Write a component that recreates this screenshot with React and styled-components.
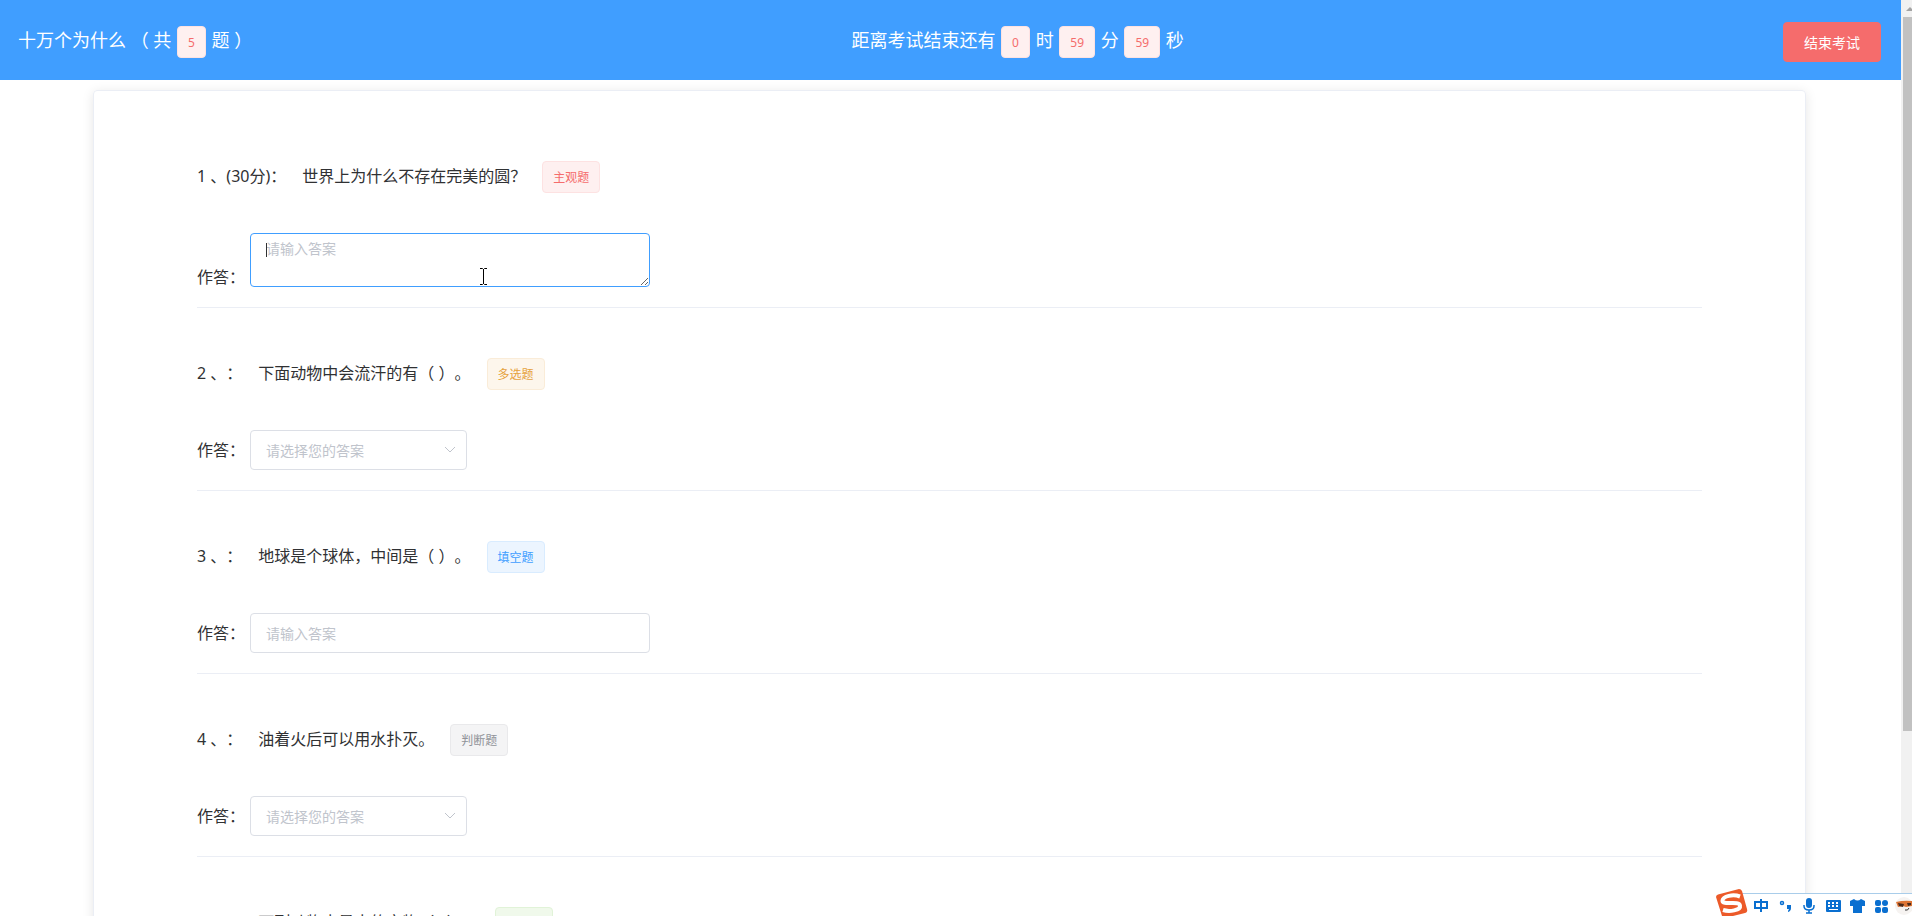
import React from "react";
import styled, { createGlobalStyle, css } from "styled-components";

const QUESTIONS = [
  {
    id: 1,
    score: "(30分)",
    title: "世界上为什么不存在完美的圆？",
    type: "主观题",
    tone: "danger",
    control: "textarea"
  },
  {
    id: 2,
    title: "下面动物中会流汗的有（ ）。",
    type: "多选题",
    tone: "warning",
    control: "select"
  },
  {
    id: 3,
    title: "地球是个球体，中间是（ ）。",
    type: "填空题",
    tone: "primary",
    control: "input"
  },
  {
    id: 4,
    title: "油着火后可以用水扑灭。",
    type: "判断题",
    tone: "info",
    control: "select"
  },
  {
    id: 5,
    title: "下列动物中最大的宠物（   ）。",
    type: "单选题",
    tone: "success",
    control: "select"
  }
];

const TONES = {
  danger: { color: "#f56c6c", background: "#fef0f0", border: "#fde2e2" },
  warning: { color: "#e6a23c", background: "#fdf6ec", border: "#faecd8" },
  primary: { color: "#409eff", background: "#ecf5ff", border: "#d9ecff" },
  info: { color: "#909399", background: "#f4f4f5", border: "#e9e9eb" },
  success: { color: "#67c23a", background: "#f0f9eb", border: "#e1f3d8" }
};

function Answer({ id, control }) {
  if (control === "textarea") {
    return (
      <TextAreaWrapper>
        <TextArea id={id} rows="2" placeholder="请输入答案" autoFocus />
        <Caret />
        <Pointer width="9" height="17" viewBox="0 0 9 17" aria-hidden="true">
          <path
            d="M1 .5h2.500l1 1 1-1H8M4.500 1v15M1 16.500h2.500l1-1 1 1H8"
            fill="none"
            stroke="#000"
          />
        </Pointer>
      </TextAreaWrapper>
    );
  }
  if (control === "input") {
    return <TextInput id={id} type="text" placeholder="请输入答案" />;
  }
  return (
    <SelectWrapper>
      <Select id={id} defaultValue="">
        <option value="">请选择您的答案</option>
      </Select>
      <svg width="12" height="12" viewBox="0 0 12 12" aria-hidden="true">
        <path d="M1 3l5 5 5-5" fill="none" stroke="#c0c4cc" />
      </svg>
    </SelectWrapper>
  );
}

function Question({ question }) {
  const { id, score, title, type, tone, control } = question;
  return (
    <QuestionItem>
      <QuestionTitle>
        <span>
          {id} 、{score}：
        </span>
        <Title>{title}</Title>
        <Tag $tone={tone}>{type}</Tag>
      </QuestionTitle>
      <AnswerRow $multiline={control === "textarea"}>
        <label htmlFor={`answer-${id}`}>作答：</label>
        <Answer id={`answer-${id}`} control={control} />
      </AnswerRow>
    </QuestionItem>
  );
}

function ImeBar() {
  return (
    <ImeContainer>
      <svg width="197" height="28" viewBox="0 0 197 28" aria-hidden="true">
        <path d="M26 5.500H197V28H26z" fill="#fff" />
        <path d="M26 5.500H197" stroke="#a9cdea" />
        <path
          d="M1 9Q1 7 3 6.500L24 1Q26 1 27 3L32 21Q33 24 30 25L18 28H7z"
          fill="#ec5a29"
        />
        <path
          d="M25 8.500C18 6 8 8 7.500 12.500C7 18 24 12 25 17.500C26 22.500 14 24 8 22"
          fill="none"
          stroke="#fff"
          strokeWidth="4"
        />
        <g fill="none" stroke="#0a6fd0" strokeWidth="2">
          <path d="M40 14h12v6H40zM46 11v13" />
          <circle cx="67" cy="15" r="1.500" strokeWidth="1.500" />
          <path d="M89 17v1q0 4 5 4t5-4v-1M94 22v3M91 25h6" strokeWidth="1.500" />
        </g>
        <g fill="#0a6fd0">
          <path d="M72 17h4v3q0 3-3 4v-1l1-2h-2z" />
          <rect x="91" y="10" width="6" height="10" rx="3" />
          <path
            fillRule="evenodd"
            d="M112 12h13q1 0 1 1v10q0 1-1 1h-13q-1 0-1-1V13q0-1 1-1zm1 2v2h2v-2zm4 0v2h2v-2zm4 0v2h2v-2zm-8 3v2h2v-2zm4 0v2h2v-2zm4 0v2h2v-2zm-7 4v1h9v-1z"
          />
          <path d="M135 13l4-2q3.500 3 7 0l4 2v5h-3v7h-9v-7h-3z" />
          <rect x="160" y="12" width="6" height="6" rx="2" />
          <rect x="167" y="12" width="6" height="6" rx="3" />
          <rect x="160" y="19" width="6" height="6" rx="2" />
          <rect x="167" y="19" width="6" height="6" rx="2" />
        </g>
        <circle cx="189" cy="18" r="9" fill="#f6f3f1" />
        <path d="M181 14q8-2 16-1v5l-6 1-3-1-5 1z" fill="#dd7434" />
        <path d="M183 15l6 1-1 3-4-1zM192 15h4v2l-3 1z" fill="#4a2a1c" />
        <path d="M190 22q3 1 4-2" fill="none" stroke="#333" />
      </svg>
    </ImeContainer>
  );
}

export default function App() {
  return (
    <Page>
      <GlobalStyle />
      <Main>
        <Header>
          <HeaderText>
            十万个为什么 （ 共 <Tag $tone="danger">5</Tag> 题 ）
          </HeaderText>
          <HeaderText>
            距离考试结束还有 <Tag $tone="danger">0</Tag> 时{" "}
            <Tag $tone="danger">59</Tag> 分 <Tag $tone="danger">59</Tag> 秒
          </HeaderText>
          <DangerButton type="button">结束考试</DangerButton>
        </Header>
        <Card>
          {QUESTIONS.map(question => (
            <Question key={question.id} question={question} />
          ))}
        </Card>
      </Main>
      <ScrollTrack>
        <svg width="9" height="17" viewBox="0 0 9 17" aria-hidden="true">
          <path d="M3 11l4-4 4 4z" fill="#a3a3a3" />
        </svg>
        <ScrollThumb />
      </ScrollTrack>
      <ImeBar />
    </Page>
  );
}

const GlobalStyle = createGlobalStyle`
  * {
    box-sizing: border-box;
  }
  body {
    margin: 0;
    color: #303133;
    background: #fff;
    font-family: "Noto Sans", "Noto Sans CJK SC", sans-serif;
    font-size: 16px;
    text-spacing-trim: space-all;
  }
  input, textarea, select, button {
    font-family: inherit;
    font-size: 14px;
  }
`;

const Page = styled.div`
  display: flex;
  height: 100vh;
  overflow: hidden;
`;
const Main = styled.main`
  flex: 1;
  min-width: 0;
  overflow: hidden;
`;
const Header = styled.header`
  display: flex;
  align-items: center;
  justify-content: space-between;
  height: 80px;
  padding: 4px 20px 0 18px;
  color: #fff;
  background: #409eff;
`;
const Tag = styled.span`
  height: 32px;
  padding: 0 10px;
  border: 1px solid;
  border-radius: 4px;
  font-size: 12px;
  line-height: 32px;
  white-space: nowrap;
  ${({ $tone }) => css`
    color: ${TONES[$tone].color};
    background: ${TONES[$tone].background};
    border-color: ${TONES[$tone].border};
  `}
`;
const HeaderText = styled.div`
  display: flex;
  align-items: flex-start;
  gap: 1px;
  font-size: 18px;
  line-height: 28px;
  white-space: pre;
`;
const DangerButton = styled.button`
  height: 40px;
  padding: 0 20px;
  border: 1px solid #f56c6c;
  border-radius: 4px;
  color: #fff;
  background: #f56c6c;
`;
const Card = styled.section`
  margin: 10px 95px 10px 93px;
  padding: 20px 103px;
  border: 1px solid #ebeef5;
  border-radius: 4px;
  box-shadow: 0 2px 12px 0 rgba(0, 0, 0, 0.1);
`;
const QuestionItem = styled.article`
  padding: 50px 0 20px;
  border-bottom: 1px solid #ebeef5;
`;
const QuestionTitle = styled.div`
  display: flex;
  align-items: flex-start;
  height: 32px;
  margin-bottom: 40px;
  line-height: 30px;
`;
const Title = styled.span`
  margin: 0 16px;
  white-space: pre;
`;
const AnswerRow = styled.div`
  display: flex;
  align-items: ${({ $multiline }) => ($multiline ? "flex-end" : "center")};
  label {
    width: 53px;
    line-height: 20px;
    white-space: nowrap;
  }
`;
const field = css`
  border: 1px solid #dcdfe6;
  border-radius: 4px;
  color: #606266;
  background: #fff;
  outline: none;
  &::placeholder {
    color: #c0c4cc;
  }
  &:focus {
    border-color: #409eff;
  }
`;
const TextInput = styled.input`
  ${field}
  width: 400px;
  height: 40px;
  padding: 0 15px;
`;
const TextAreaWrapper = styled.div`
  position: relative;
`;
const TextArea = styled.textarea`
  ${field}
  display: block;
  width: 400px;
  height: 54px;
  padding: 4px 15px;
  line-height: 21px;
  caret-color: transparent;
`;
const Caret = styled.span`
  position: absolute;
  top: 10px;
  left: 16px;
  width: 1px;
  height: 14px;
  background: #303133;
`;
const Pointer = styled.svg`
  position: absolute;
  top: 35px;
  left: 229px;
  pointer-events: none;
`;
const SelectWrapper = styled.div`
  position: relative;
  width: 217px;
  svg {
    position: absolute;
    top: 14px;
    right: 11px;
    pointer-events: none;
  }
`;
const Select = styled.select`
  ${field}
  appearance: none;
  width: 100%;
  height: 40px;
  padding: 0 15px;
  color: #c0c4cc;
`;
const ScrollTrack = styled.div`
  width: 11px;
  padding-left: 2px;
  background: #f1f1f1;
  svg {
    display: block;
  }
`;
const ScrollThumb = styled.div`
  height: 78%;
  background: #c1c1c1;
`;
/* input method toolbar floating over the page corner */
const ImeContainer = styled.div`
  position: fixed;
  right: 0;
  bottom: 0;
  svg {
    display: block;
  }
`;
